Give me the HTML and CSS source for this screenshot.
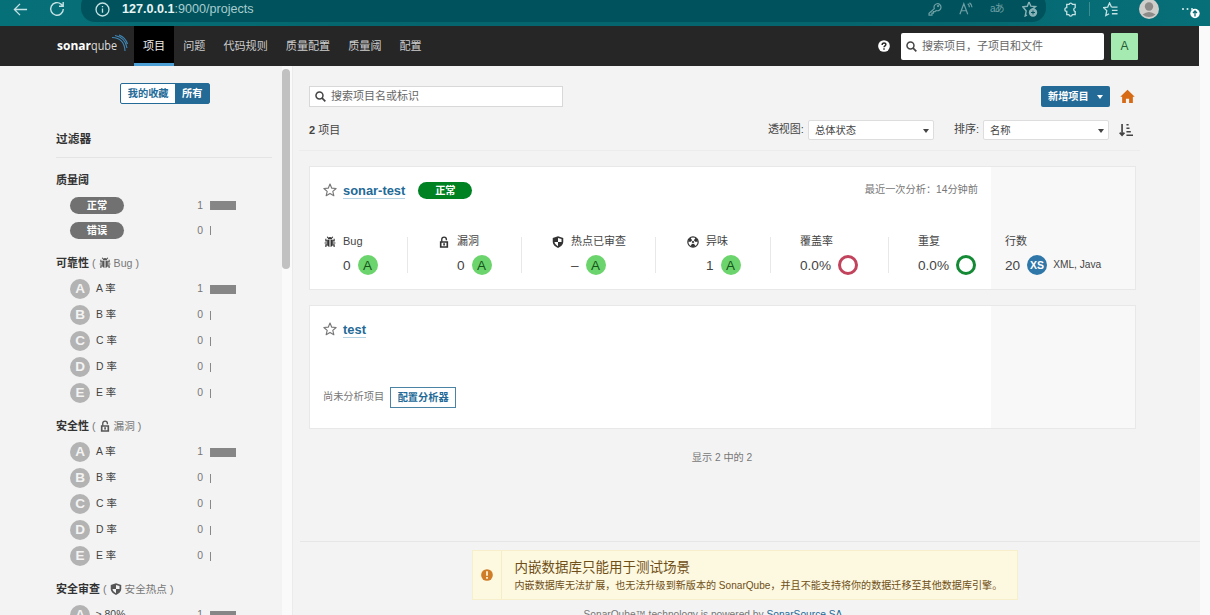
FILE: index.html
```html
<!DOCTYPE html>
<html lang="zh-CN">
<head>
<meta charset="utf-8">
<title>项目</title>
<link rel="stylesheet" href="styles.css">
</head>
<body>
<svg width="0" height="0" class="defs">
  <symbol id="bug" viewBox="0 0 16 16"><path d="M5 4.2a3 3 0 0 1 6 0z"/><path d="M4.3 5h3v9.6C5.400 14.300 4.300 12.800 4.300 11zM8.700 5h3v6c0 1.800-1.100 3.300-3 3.600z"/><path d="M4.500 6.500h-2V3.800M11.500 6.500h2V3.800M4.500 9.300H.8M11.500 9.300h3.700M4.700 11.800H2.500v3M11.300 11.800h2.200v3M5.500 2.500 4.200 1M10.500 2.500 11.800 1" fill="none" stroke="currentColor" stroke-width="1.500"/></symbol>
  <symbol id="lock" viewBox="0 0 16 16"><path d="M5 7.500V4.500a3.100 3.100 0 0 1 6.200 0v1" fill="none" stroke="currentColor" stroke-width="1.800"/><path fill-rule="evenodd" d="M2.500 7h11v8.500h-11zM4.700 9v4.500h6.600V9z"/><path d="M7 9.500h2.200v3H7z"/></symbol>
  <symbol id="shield" viewBox="0 0 16 16"><path fill-rule="evenodd" d="M8 .3 15 2.500v5.500c0 3.500-3 6.200-7 7.900C4 14.200 1 11.500 1 8V2.500zM8 2.700V8H3.300c.3 2.500 2 4 4.700 5.500V8h4.700V4z"/></symbol>
  <symbol id="smell" viewBox="0 0 16 16"><circle cx="8" cy="8" r="6.900" fill="none" stroke="currentColor" stroke-width="1.600"/><path d="M8 7.800 4.700 2.300A6.500 6.500 0 0 0 1.500 7.800zM8 7.800h6.500a6.500 6.500 0 0 0-3.200-5.500zM8 8 4.700 13.700a6.500 6.500 0 0 0 6.600 0z"/><path d="M5.500 2.500 8 6l2.500-3.500z" fill="#fff"/><circle cx="8" cy="8" r="2.100" stroke="#fff" stroke-width="1.200"/></symbol>
  <symbol id="star" viewBox="0 0 16 16"><path d="m8 1.200 2 4.700 5 .4-3.800 3.300 1.200 5L8 11.900l-4.400 2.700 1.200-5L1 6.300l5-.4z" fill="none" stroke="currentColor" stroke-width="1.300" stroke-linejoin="round"/></symbol>
  <symbol id="search" viewBox="0 0 16 16"><circle cx="6.500" cy="6.500" r="5.100" fill="none" stroke="currentColor" stroke-width="2.200"/><path d="m10 10 5 5" stroke="currentColor" stroke-width="2.500"/></symbol>
</svg>

<header class="browser">
  <svg class="back" viewBox="0 0 16 16"><path d="M15 8H1.500M7.500 2 1.500 8l6 6"/></svg>
  <svg class="reload" viewBox="0 0 16 16"><path d="M14.300 8A6.300 6.300 0 1 1 12 3.100L14 5M14.200 1v4.200H10"/></svg>
  <div class="address">
    <svg class="info" viewBox="0 0 16 16"><circle cx="8" cy="8" r="6.900"/><path d="M8 7v4.500M8 4.200v1.300"/></svg>
    <span class="url"><b>127.0.0.1</b>:9000/projects</span>
    <svg class="tool key" viewBox="0 0 16 16"><path d="M7.200 7.600a4 4 0 1 1 2.200 2.100L8 11H6.200v1.800H4.500V15H1.200v-2.200z"/><circle cx="11.500" cy="4.700" r=".6"/></svg>
    <svg class="tool" viewBox="0 0 16 16"><path d="m1 14 4.500-12L10 14M2.500 10h6M10 2q2 1.500 1.800 4M12 1q3 2 2.800 5"/></svg>
    <span class="tool translate">aあ</span>
    <svg class="tool fav" viewBox="0 0 16 16"><path d="m7 1 1.900 4.200 4.600.4-3.500 3M5 14l-1.800 1 1-5L.8 5.800l4.500-.5L7 1"/><circle cx="11" cy="11.500" r="3.500" fill="#8ab3b8"/><path d="M9 11.500h4M11 9.500v4" class="plus"/></svg>
  </div>
  <svg class="ext" viewBox="0 0 16 16"><path d="M4 2.500h2.500a1.800 1.800 0 0 1 3.500 0h3v3.500a2.200 2.200 0 0 0 0 4.200v3.300h-3a1.900 1.900 0 0 1-3.700 0H4v-3.500a2 2 0 1 1 0-4z"/></svg>
  <i class="bar"></i>
  <svg class="list" viewBox="0 0 16 16"><path d="M9 5.400 7 1 5 5.400l-4.400.5L4 9.200 3 14.500l3.500-2M9 5.500h6.500M9.500 9h6M9.500 12.500h6"/></svg>
  <svg class="face" viewBox="0 0 20 20"><circle cx="10" cy="10" r="10" fill="#d0cecb"/><circle cx="10" cy="7.500" r="4.200" fill="#8d8b89"/><path d="M3.500 15.500q6.500-5 13 0-6.500 5-13 0" fill="#8d8b89"/></svg>
  <svg class="more" viewBox="0 0 20 16"><g fill="#d9eff0"><circle cx="2" cy="4" r="1"/><circle cx="6.500" cy="4" r="1"/><circle cx="11" cy="4" r="1"/></g><circle cx="14" cy="8.500" r="4.700" fill="#fff"/><path d="M14 11.500V6m-2 2 2-2 2 2" stroke="#086b75" stroke-width="1.300" fill="none"/></svg>
</header>

<nav class="nav">
  <svg class="logo" width="72" height="26" viewBox="0 0 72 26">
    <text x="0" y="18" textLength="34" lengthAdjust="spacingAndGlyphs" class="logo-bold">sonar</text>
    <text x="34" y="18" textLength="26" lengthAdjust="spacingAndGlyphs" class="logo-light">qube</text>
    <path d="M55 5.500Q67.500 6 68 19M58 3.500Q68.500 5.500 70 16M62 3Q68.500 5.500 70.500 12" fill="none" stroke="#3f86b5" stroke-width="1.100"/>
  </svg>
  <a class="tab active">项目</a><a class="tab">问题</a><a class="tab">代码规则</a><a class="tab">质量配置</a><a class="tab">质量阈</a><a class="tab">配置</a>
  <svg class="help" viewBox="0 0 16 16"><circle cx="8" cy="8" r="7.800" fill="#fff"/><path d="M5.500 6.500C5.500 3 10.700 3.200 10.500 6.200 10.400 7.800 8 7.800 8 9.800M8 11v2" fill="none" stroke="#262626" stroke-width="1.900"/></svg>
  <div class="nav-search"><svg><use href="#search"/></svg>搜索项目，子项目和文件</div>
  <div class="user">A</div>
</nav>

<div class="body">
  <aside class="side">
    <div class="toggle"><span>我的收藏</span><span class="on">所有</span></div>
    <h2>过滤器</h2>
    <section>
      <h3>质量阈</h3>
      <div class="row gate"><span class="pill grey">正常</span><span class="n">1</span><i class="meter full"></i></div>
      <div class="row gate"><span class="pill grey">错误</span><span class="n">0</span><i class="meter"></i></div>
    </section>
    <section>
      <h3>可靠性 <small>( <svg><use href="#bug"/></svg> Bug )</small></h3>
      <div class="row"><b class="grade">A</b><span>A 率</span><span class="n">1</span><i class="meter full"></i></div>
      <div class="row"><b class="grade">B</b><span>B 率</span><span class="n">0</span><i class="meter"></i></div>
      <div class="row"><b class="grade">C</b><span>C 率</span><span class="n">0</span><i class="meter"></i></div>
      <div class="row"><b class="grade">D</b><span>D 率</span><span class="n">0</span><i class="meter"></i></div>
      <div class="row"><b class="grade">E</b><span>E 率</span><span class="n">0</span><i class="meter"></i></div>
    </section>
    <section>
      <h3>安全性 <small>( <svg><use href="#lock"/></svg> 漏洞 )</small></h3>
      <div class="row"><b class="grade">A</b><span>A 率</span><span class="n">1</span><i class="meter full"></i></div>
      <div class="row"><b class="grade">B</b><span>B 率</span><span class="n">0</span><i class="meter"></i></div>
      <div class="row"><b class="grade">C</b><span>C 率</span><span class="n">0</span><i class="meter"></i></div>
      <div class="row"><b class="grade">D</b><span>D 率</span><span class="n">0</span><i class="meter"></i></div>
      <div class="row"><b class="grade">E</b><span>E 率</span><span class="n">0</span><i class="meter"></i></div>
    </section>
    <section>
      <h3>安全审查 <small>( <svg><use href="#shield"/></svg> 安全热点 )</small></h3>
      <div class="row"><b class="grade">A</b><span>≥ 80%</span><span class="n">1</span><i class="meter full"></i></div>
    </section>
  </aside>
  <div class="track"><div class="thumb"></div></div>

  <main class="main">
    <div class="top">
      <div class="find"><svg><use href="#search"/></svg>搜索项目名或标识</div>
      <div class="create">新增项目<i class="caret"></i></div>
      <svg class="home" viewBox="0 0 16 16"><path d="M8 .8 15.700 8.300h-2V15H9.700v-4.500H6.300V15H2.300V8.300h-2z" fill="#d66a15"/></svg>
    </div>
    <div class="options">
      <span class="count"><b>2</b> 项目</span>
      <label>透视图:</label><div class="select">总体状态<i class="caret"></i></div>
      <label class="sort">排序:</label><div class="select">名称<i class="caret"></i></div>
      <svg class="order" viewBox="0 0 16 16"><path d="M3.500 1v12M.8 11l2.700 3L6.200 11M8.500 2h2.500M8.500 6h3.500M8.500 10h5M8.500 14H16" fill="none" stroke="#444" stroke-width="1.900"/></svg>
    </div>
    <div class="rule"></div>

    <article class="card">
      <div class="title"><svg><use href="#star"/></svg><a>sonar-test</a><span class="pill green">正常</span><span class="when">最近一次分析：14分钟前</span></div>
      <div class="measures">
        <div class="m first"><p><svg><use href="#bug"/></svg>Bug</p><div class="val in"><span>0</span><i class="rate">A</i></div></div>
        <div class="m"><p><svg><use href="#lock"/></svg>漏洞</p><div class="val in"><span>0</span><i class="rate">A</i></div></div>
        <div class="m"><p><svg><use href="#shield"/></svg>热点已审查</p><div class="val in"><span>–</span><i class="rate">A</i></div></div>
        <div class="m smells"><p><svg><use href="#smell"/></svg>异味</p><div class="val in"><span>1</span><i class="rate">A</i></div></div>
        <div class="m coverage"><p>覆盖率</p><div class="val"><span>0.0%</span><i class="ring red"></i></div></div>
        <div class="m last"><p>重复</p><div class="val"><span>0.0%</span><i class="ring"></i></div></div>
        <div class="m lines"><p>行数</p><div class="val"><span>20</span><i class="rate size">XS</i><small>XML, Java</small></div></div>
      </div>
    </article>

    <article class="card">
      <div class="title"><svg><use href="#star"/></svg><a>test</a></div>
      <div class="pending">尚未分析项目<span class="configure">配置分析器</span></div>
    </article>
    <div class="shown">显示 2 中的 2</div>

    <footer>
      <div class="alert">
        <div class="alert-icon"><svg viewBox="0 0 16 16"><circle cx="8" cy="8" r="7.800" fill="#cf7d28"/><path d="M8 3v6M8 10.800V13" stroke="#fff9dc" stroke-width="2.300"/></svg></div>
        <div class="alert-text"><h4>内嵌数据库只能用于测试场景</h4><p>内嵌数据库无法扩展，也无法升级到新版本的 SonarQube，并且不能支持将你的数据迁移至其他数据库引擎。</p></div>
      </div>
      <div class="powered">SonarQube™ technology is powered by <a>SonarSource SA</a></div>
    </footer>
  </main>
</div>
</body>
</html>
```
FILE: styles.css
```css
* { box-sizing: border-box; }
body { margin: 0; width: 1210px; height: 615px; overflow: hidden; background: #fafafa; color: #444; font: 10.2px/1.4 "Liberation Sans", "Noto Sans CJK SC", sans-serif; }
h2, h3, h4, p { margin: 0; }
i { font-style: normal; }
svg { flex: none; fill: currentColor; }
.defs { display: block; height: 0; }

.browser { display: flex; align-items: center; height: 26px; padding-bottom: 8px; background: linear-gradient(90deg, #067078, #04656e 35%, #04656e 70%, #076f78); color: #c4e2e4; }
.browser svg { fill: none; stroke: currentColor; stroke-width: 1.4; }
.browser .back { width: 15px; height: 15px; margin-left: 13px; }
.browser .reload { width: 16px; height: 16px; margin-left: 21px; }
.address { display: flex; align-items: center; width: 965px; height: 30px; margin-left: 16px; padding-top: 4px; border-radius: 14px; background: #00535c; align-self: flex-end; margin-bottom: -4px; }
.browser .info { width: 15px; height: 15px; margin-left: 14px; }
.url { width: 800px; margin-left: 12px; padding-top: 2px; font-size: 12.6px; color: #a8cdd0; }
.url b { color: #e8f5f5; }
.tool { width: 14px; height: 14px; margin-right: 17px; color: #6e9fa5; }
.tool.key { margin-left: 6px; }
.translate { display: flex; align-items: center; width: 15px; font-size: 10px; letter-spacing: -1px; }
.browser .fav { width: 16px; height: 16px; margin-right: 0; color: #8ab3b8; }
.fav .plus { stroke: #00535c; stroke-width: 1; }
.browser .ext { width: 15px; height: 15px; margin-left: 17px; }
.bar { width: 1px; height: 14px; margin-left: 11px; background: #3c8c93; }
.browser .list { width: 15px; height: 15px; margin-left: 13px; }
.browser .face { width: 20px; height: 20px; margin-left: 21px; stroke: none; }
.browser .more { width: 20px; height: 16px; margin-left: 22px; margin-top: 8px; stroke: none; }

.nav { display: flex; align-items: center; width: 1199px; height: 40px; padding-left: 57px; background: #262626; color: #ccc; }
.logo { width: 72px; margin-right: 5px; margin-top: -2px; fill: #fff; font: 13px "Open Sans", sans-serif; }
.logo-bold { font-weight: 700; }
.logo-light { font-weight: 400; fill: #ddd; }
.tab { height: 40px; padding: 0 9px; font-size: 11.1px; line-height: 41px; }
.tab.active { background: #000; border-bottom: 3px solid #4b9fd5; color: #eee; }
.help { width: 12px; height: 12px; margin-left: auto; }
.nav-search { display: flex; align-items: center; width: 203px; height: 27px; padding-top: 1px; margin-left: 11px; border-radius: 2px; background: #fff; color: #666; font-size: 11px; }
.nav-search svg, .find svg { width: 11px; height: 11px; margin: 0 5px 0 5px; color: #444; }
.user { width: 27px; height: 27px; margin: 0 61px 0 7px; background: #a5eab1; color: #245b33; font-size: 12px; line-height: 27px; text-align: center; border-radius: 1px; }

.body { display: flex; width: 1200px; height: 549px; background: #f3f3f3; }
.side { width: 282px; height: 549px; overflow: hidden; padding: 17px 10px 0 56px; }
.toggle { display: flex; width: 90px; height: 21px; margin-left: 64px; border: 1px solid #236a97; border-radius: 2px; font-size: 10.2px; font-weight: 700; line-height: 19px; color: #236a97; background: #fff; }
.toggle span { width: 55px; text-align: center; }
.toggle .on { width: 34px; background: #236a97; color: #fff; }
.side h2 { height: 54px; padding-top: 27px; margin-bottom: 10px; border-bottom: 1px solid #e4e4e4; font-size: 11.7px; color: #333; }
.side h3 { display: flex; align-items: center; height: 25px; font-size: 11px; color: #333; white-space: pre; }
.side section { margin-bottom: 8px; }
.side small { display: flex; align-items: center; font-size: 10.6px; font-weight: 400; color: #777; gap: 3px; white-space: nowrap; }
.side small svg { width: 12px; height: 12px; color: #555; }
.row { display: flex; align-items: center; height: 26px; padding-left: 14px; font-size: 10.4px; }
.row span:not(.pill) { padding-top: 1px; }
.row.gate { height: 25px; }
.grade { width: 20px; height: 20px; margin-right: 6px; border-radius: 50%; background: #b3b3b3; color: #f3f3f3; font-size: 13.5px; line-height: 20px; text-align: center; }
.n { margin-left: auto; color: #777; }
.meter { width: 26px; height: 9px; margin: 0 36px 0 7px; border-left: 1px solid #888; }
.meter.full { background: #868686; }
.pill { width: 54px; height: 17px; border-radius: 9px; color: #fff; font-size: 10.2px; font-weight: 700; line-height: 17px; text-align: center; }
.grey { background: #717171; }
.green { background: #008223; margin-left: 13px; }
.track { width: 11px; padding-top: 3px; background: #fafafa; border-right: 1px solid #ebebeb; }
.thumb { width: 8px; height: 200px; border-radius: 4px; background: #c1c1c1; }

.main { width: 907px; padding: 20px 65px 0 16px; }
.top { display: flex; align-items: center; height: 21px; }
.find { display: flex; align-items: center; width: 254px; height: 21px; border: 1px solid #d8d8d8; background: #fff; font-size: 11px; color: #666; }
.create { display: flex; align-items: center; width: 69px; height: 21px; margin-left: auto; padding: 1px 7px 0; border-radius: 2px; background: #236a97; color: #fff; font-size: 10.2px; font-weight: 700; white-space: nowrap; }
.caret { border: 3px solid transparent; border-top: 4px solid currentColor; border-bottom: 0; margin-left: auto; }
.home { width: 15px; height: 15px; margin-left: 10px; }
.options { display: flex; align-items: center; height: 20px; margin-top: 13px; font-size: 11px; }
.count { margin-right: auto; padding-top: 2px; }
.select { display: flex; align-items: center; width: 126px; height: 20px; margin-left: 4px; padding: 2px 4px 0 6px; border: 1px solid #ddd; border-radius: 2px; background: #fff; font-size: 10.3px; }
.sort { margin-left: 20px; }
.order { width: 14px; height: 14px; margin: 0 2px 0 10px; }
.rule { height: 1px; margin: 10px -5px 15px -10px; background: #ececec; }
.card { width: 827px; height: 124px; margin-bottom: 15px; padding-top: 14px; border: 1px solid #e8e8e8; background: linear-gradient(90deg, #fff 681px, #f8f8f8 681px); }
.title { display: flex; align-items: center; height: 20px; padding: 0 157px 2px 13px; }
.title svg { width: 14px; height: 14px; color: #777; }
.title a { margin-left: 6px; margin-top: 2px; border-bottom: 1px solid #b5d3e2; color: #236a97; font-size: 12.9px; font-weight: 700; line-height: 15px; }
.when { margin-left: auto; font-size: 10.2px; color: #777; }
.measures { display: grid; grid-template-columns: 98px 114px 134px 115px 118px 102px 1fr; height: 36px; margin-top: 36px; }
.m { height: 36px; padding-left: 30px; border-right: 1px solid #e8e8e8; white-space: nowrap; }
.m.first { padding-left: 14px; }
.m.smells { padding-left: 31px; }
.m.coverage { padding-left: 29px; }
.m.last { border: 0; padding-left: 29px; }
.m.lines { border: 0; padding-left: 14px; }
.m p { display: flex; align-items: center; height: 16px; margin-top: -3px; font-size: 11px; }
.m p svg { width: 12px; height: 12px; margin-right: 7px; color: #333; }
.val { display: flex; align-items: center; height: 20px; margin-top: 5px; font-size: 13.6px; }
.val span { padding-top: 1px; }
.val.in { padding-left: 19px; }
.rate, .ring { width: 20px; height: 20px; margin-left: 7px; border-radius: 50%; }
.rate { background: #6cd46c; color: #17541c; font-size: 13.5px; line-height: 21px; text-align: center; }
.ring { border: 3px solid #158a35; background: #fff; }
.ring.red { border-color: #c2435c; }
.rate.size { background: #2f77a8; color: #fff; font-size: 10.5px; font-weight: 700; }
.val small { margin-left: 6px; font-size: 10.2px; }
.pending { display: flex; align-items: center; height: 21px; margin: 47px 0 0 13px; font-size: 10.2px; color: #777; }
.configure { width: 66px; height: 21px; margin-left: 6px; border: 1px solid #4b83a5; font-weight: 700; line-height: 20px; text-align: center; color: #236a97; }
.shown { height: 15px; margin-top: 21px; font-size: 10.2px; line-height: 15px; text-align: center; color: #777; }

footer { display: flex; flex-direction: column; align-items: center; margin: 76px -65px 0 -9px; padding: 8px 8px 0 0; border-top: 1px solid #e6e6e6; }
.alert { display: flex; width: 546px; height: 50px; margin-right: 3px; border: 1px solid #f7efcb; background: #fdf8e0; color: #6f4f17; }
.alert-icon { display: flex; align-items: center; justify-content: center; width: 29px; border-right: 1px solid #f5edc8; }
.alert-icon svg { width: 12px; height: 12px; }
.alert-text { padding: 7px 0 0 13px; white-space: nowrap; }
.alert h4 { font-size: 13.5px; font-weight: 400; line-height: 19px; }
.alert p { font-size: 10.08px; line-height: 17px; }
.powered { width: 546px; padding-left: 112px; margin-top: 7px; margin-right: 3px; font-size: 10.2px; line-height: 15px; color: #777; white-space: nowrap; }
.powered a { color: #236a97; }
```
